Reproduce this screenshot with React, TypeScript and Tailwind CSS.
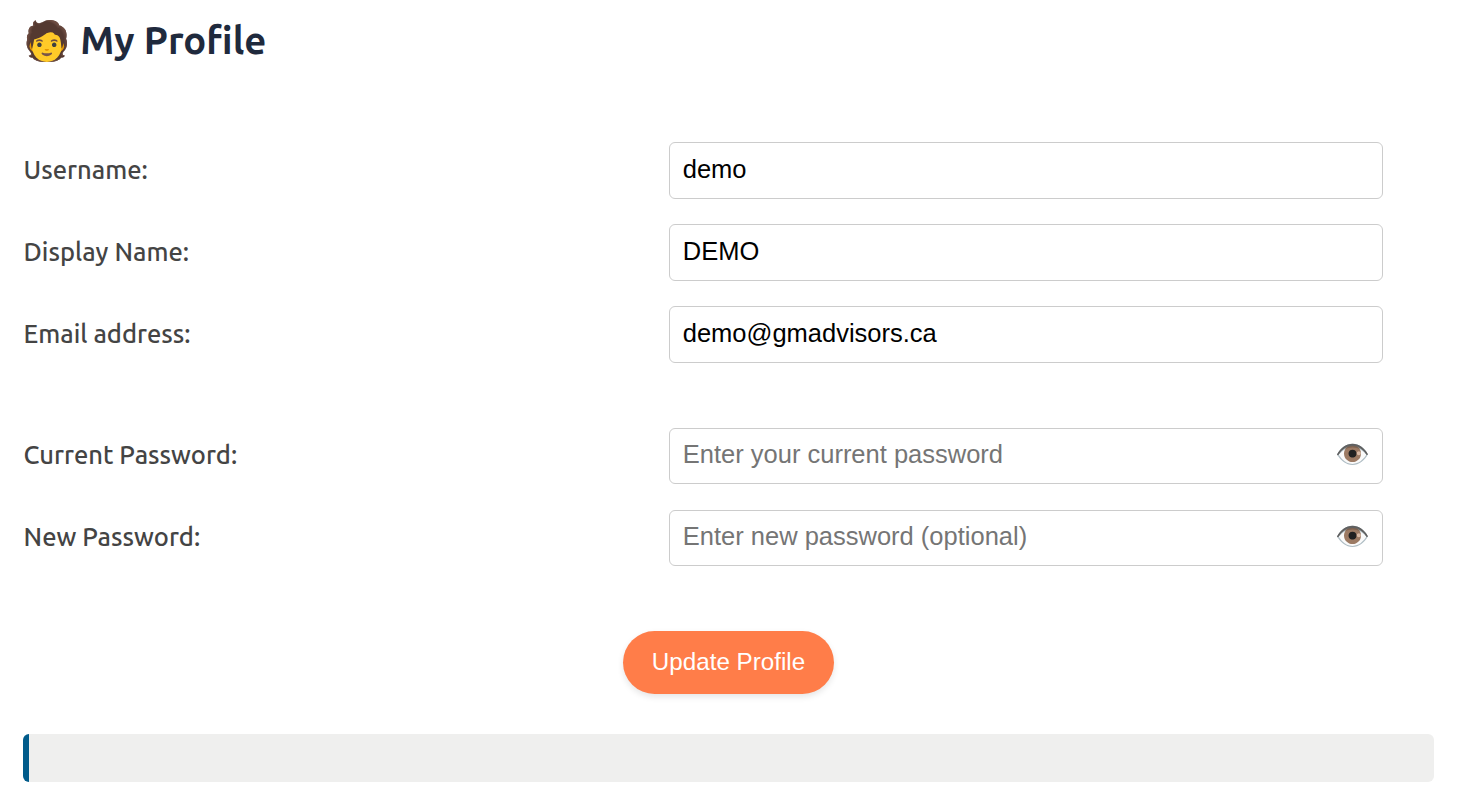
import { useState } from 'react'

interface FieldProps {
  label: string
  defaultValue?: string
  placeholder?: string
  secret?: boolean
}

function Field({ label, defaultValue, placeholder, secret }: FieldProps) {
  const [visible, setVisible] = useState(false)

  return (
    <label className="flex items-center h-[57px]">
      <span className={secret ? 'w-[645.4px] pb-0.5 text-[25.5px] font-medium text-[#444]' : 'w-[645.4px] text-[25.5px] font-medium text-[#444]'}>
        {label}
      </span>
      <span className="relative w-[714px]">
        <input
          type={secret && !visible ? 'password' : 'text'}
          defaultValue={defaultValue}
          placeholder={placeholder}
          className={
            secret
              ? "block w-full h-14 mb-px pl-[12.75px] pr-14 pb-1 border border-[#ccc] rounded-md bg-white text-[25.5px] text-black placeholder:text-[#757575] font-['Liberation_Sans',sans-serif]"
              : "block w-full h-[57px] px-[12.75px] pb-0.5 border border-[#ccc] rounded-md bg-white text-[25.5px] text-black font-['Liberation_Sans',sans-serif]"
          }
        />
        {secret && (
          <button
            type="button"
            aria-label="Toggle password visibility"
            onClick={() => setVisible(!visible)}
            className="absolute right-[13px] top-[11px] text-[28px] leading-8 font-['Liberation_Sans','Noto_Color_Emoji',sans-serif]"
          >
            👁️
          </button>
        )}
      </span>
    </label>
  )
}

export default function App() {
  return (
    <div className="h-[797px] bg-white px-[23.6px] pt-[18px] font-['Ubuntu','Noto_Sans','Noto_Color_Emoji',sans-serif]">
      <h1 className="h-11 text-[38.25px] leading-11 font-semibold whitespace-nowrap text-[#1f2a3d]">🧑 My Profile</h1>

      <form>
        <div className="mt-20 flex flex-col gap-[25px]">
          <Field label="Username:" defaultValue="demo" />
          <Field label="Display Name:" defaultValue="DEMO" />
          <Field label="Email address:" defaultValue="demo@gmadvisors.ca" />
        </div>

        {/* Password change */}
        <div className="mt-[65px] flex flex-col gap-[25px]">
          <Field label="Current Password:" placeholder="Enter your current password" secret />
          <Field label="New Password:" placeholder="Enter new password (optional)" secret />
        </div>

        <div className="mt-16 flex justify-center">
          <button
            type="button"
            className="w-[211px] h-[63px] pb-px rounded-full bg-[#ff7d49] text-[24.2px] text-white shadow-[0_3px_6px_rgba(0,0,0,0.1)] font-['Liberation_Sans',sans-serif]"
          >
            Update Profile
          </button>
        </div>
      </form>

      {/* Status message */}
      <div className="mt-10 -ml-[0.6px] h-12 w-[1411px] rounded-md border-l-6 border-[#005b8a] bg-[#efefee]" />
    </div>
  )
}
